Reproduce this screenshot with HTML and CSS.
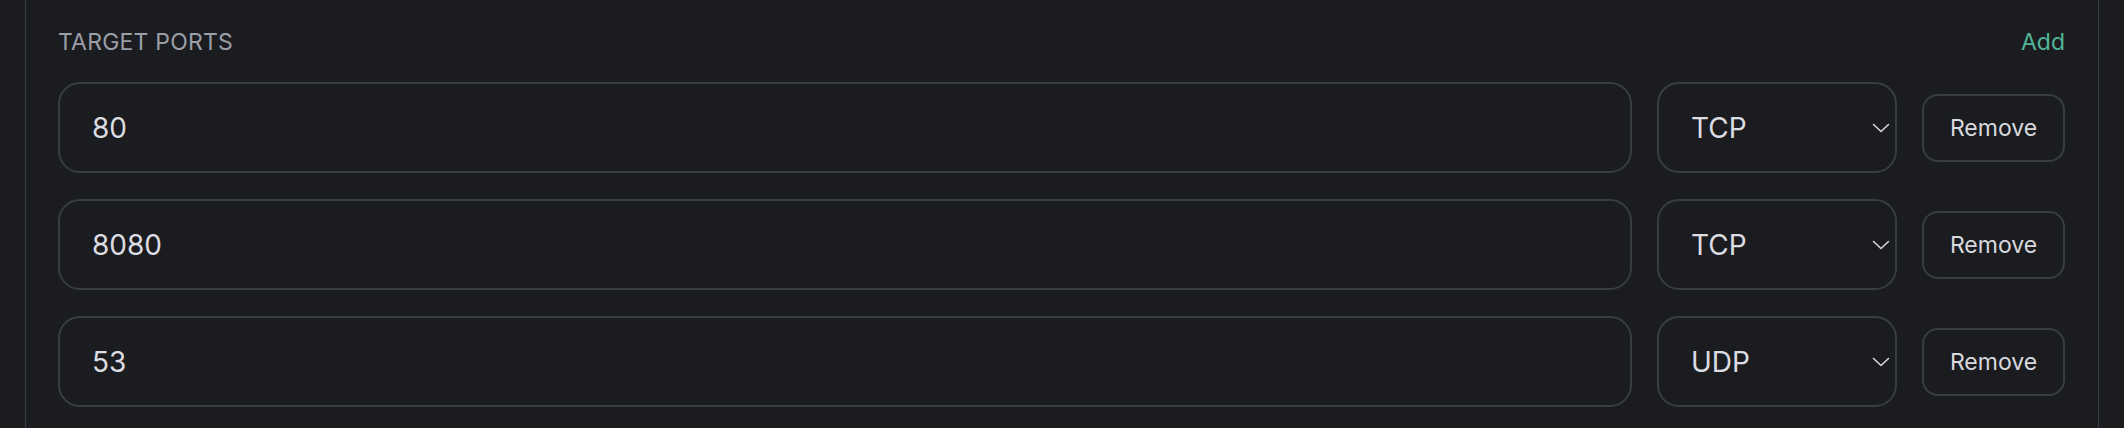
FILE: index.html
```html
<!DOCTYPE html>
<html lang="en">
<head>
<meta charset="utf-8">
<title>Target ports</title>
<link rel="stylesheet" href="styles.css">
</head>
<body>
<div class="panel">
  <div class="header">
    <span class="label">TARGET PORTS</span>
    <button class="add" type="button">Add</button>
  </div>
  <div class="rows">
    <div class="row">
      <input class="port" type="text" value="80">
      <div class="select-wrap">
        <select class="proto"><option selected>TCP</option><option>UDP</option></select>
        <svg class="chev" width="18" height="10" viewBox="0 0 18 10"><path d="M1.5 1.5 L9 8.5 L16.5 1.5" fill="none" stroke="#d6d7dd" stroke-width="1.6" stroke-linecap="round" stroke-linejoin="round"/></svg>
      </div>
      <button class="remove" type="button">Remove</button>
    </div>
    <div class="row">
      <input class="port" type="text" value="8080">
      <div class="select-wrap">
        <select class="proto"><option selected>TCP</option><option>UDP</option></select>
        <svg class="chev" width="18" height="10" viewBox="0 0 18 10"><path d="M1.5 1.5 L9 8.5 L16.5 1.5" fill="none" stroke="#d6d7dd" stroke-width="1.6" stroke-linecap="round" stroke-linejoin="round"/></svg>
      </div>
      <button class="remove" type="button">Remove</button>
    </div>
    <div class="row">
      <input class="port" type="text" value="53">
      <div class="select-wrap">
        <select class="proto"><option>TCP</option><option selected>UDP</option></select>
        <svg class="chev" width="18" height="10" viewBox="0 0 18 10"><path d="M1.5 1.5 L9 8.5 L16.5 1.5" fill="none" stroke="#d6d7dd" stroke-width="1.6" stroke-linecap="round" stroke-linejoin="round"/></svg>
      </div>
      <button class="remove" type="button">Remove</button>
    </div>
  </div>
</div>
</body>
</html>
```
FILE: styles.css
```css
html, body {
  margin: 0;
  padding: 0;
  background: #1b1c20;
  height: 100%;
}
body {
  font-family: Inter, "Noto Sans", sans-serif;
  color: #dcdde3;
}
.panel {
  margin-left: 25px;
  width: 2074px;
  min-height: 428px;
  border-left: 1px solid #3a3d44;
  border-right: 1px solid #3a3d44;
  padding: 26px 33px 0 32px;
  box-sizing: border-box;
}
.header {
  display: flex;
  justify-content: space-between;
  align-items: center;
  height: 32px;
  margin-bottom: 24px;
}
.label {
  font-size: 23px;
  line-height: 32px;
  color: #9a9ea7;
  letter-spacing: 0.2px;
}
.add {
  background: none;
  border: 0;
  padding: 0;
  font-family: inherit;
  font-size: 23px;
  line-height: 32px;
  color: #52b596;
  cursor: pointer;
}
.rows {
  display: flex;
  flex-direction: column;
  gap: 26px;
}
.row {
  display: flex;
  align-items: center;
  gap: 25px;
}
.port {
  flex: 1;
  min-width: 0;
  height: 91px;
  box-sizing: border-box;
  border: 2px solid #393c43;
  border-radius: 22px;
  background: #1b1c20;
  color: #dcdde3;
  font-family: inherit;
  font-size: 28px;
  padding: 0 32px;
  outline: none;
}
.select-wrap {
  position: relative;
  width: 240px;
  height: 91px;
  flex: none;
}
.proto {
  appearance: none;
  -webkit-appearance: none;
  width: 100%;
  height: 100%;
  box-sizing: border-box;
  border: 2px solid #393c43;
  border-radius: 22px;
  background: #1b1c20;
  color: #dcdde3;
  font-family: inherit;
  font-size: 28px;
  padding: 0 32px;
  outline: none;
}
.chev {
  position: absolute;
  right: 7px;
  top: 41px;
  pointer-events: none;
}
.remove {
  flex: none;
  width: 143px;
  height: 68px;
  box-sizing: border-box;
  border: 2px solid #393c43;
  border-radius: 16px;
  background: #1b1c20;
  color: #d8d9df;
  font-family: inherit;
  font-size: 23px;
  padding: 0;
  cursor: pointer;
}
```
